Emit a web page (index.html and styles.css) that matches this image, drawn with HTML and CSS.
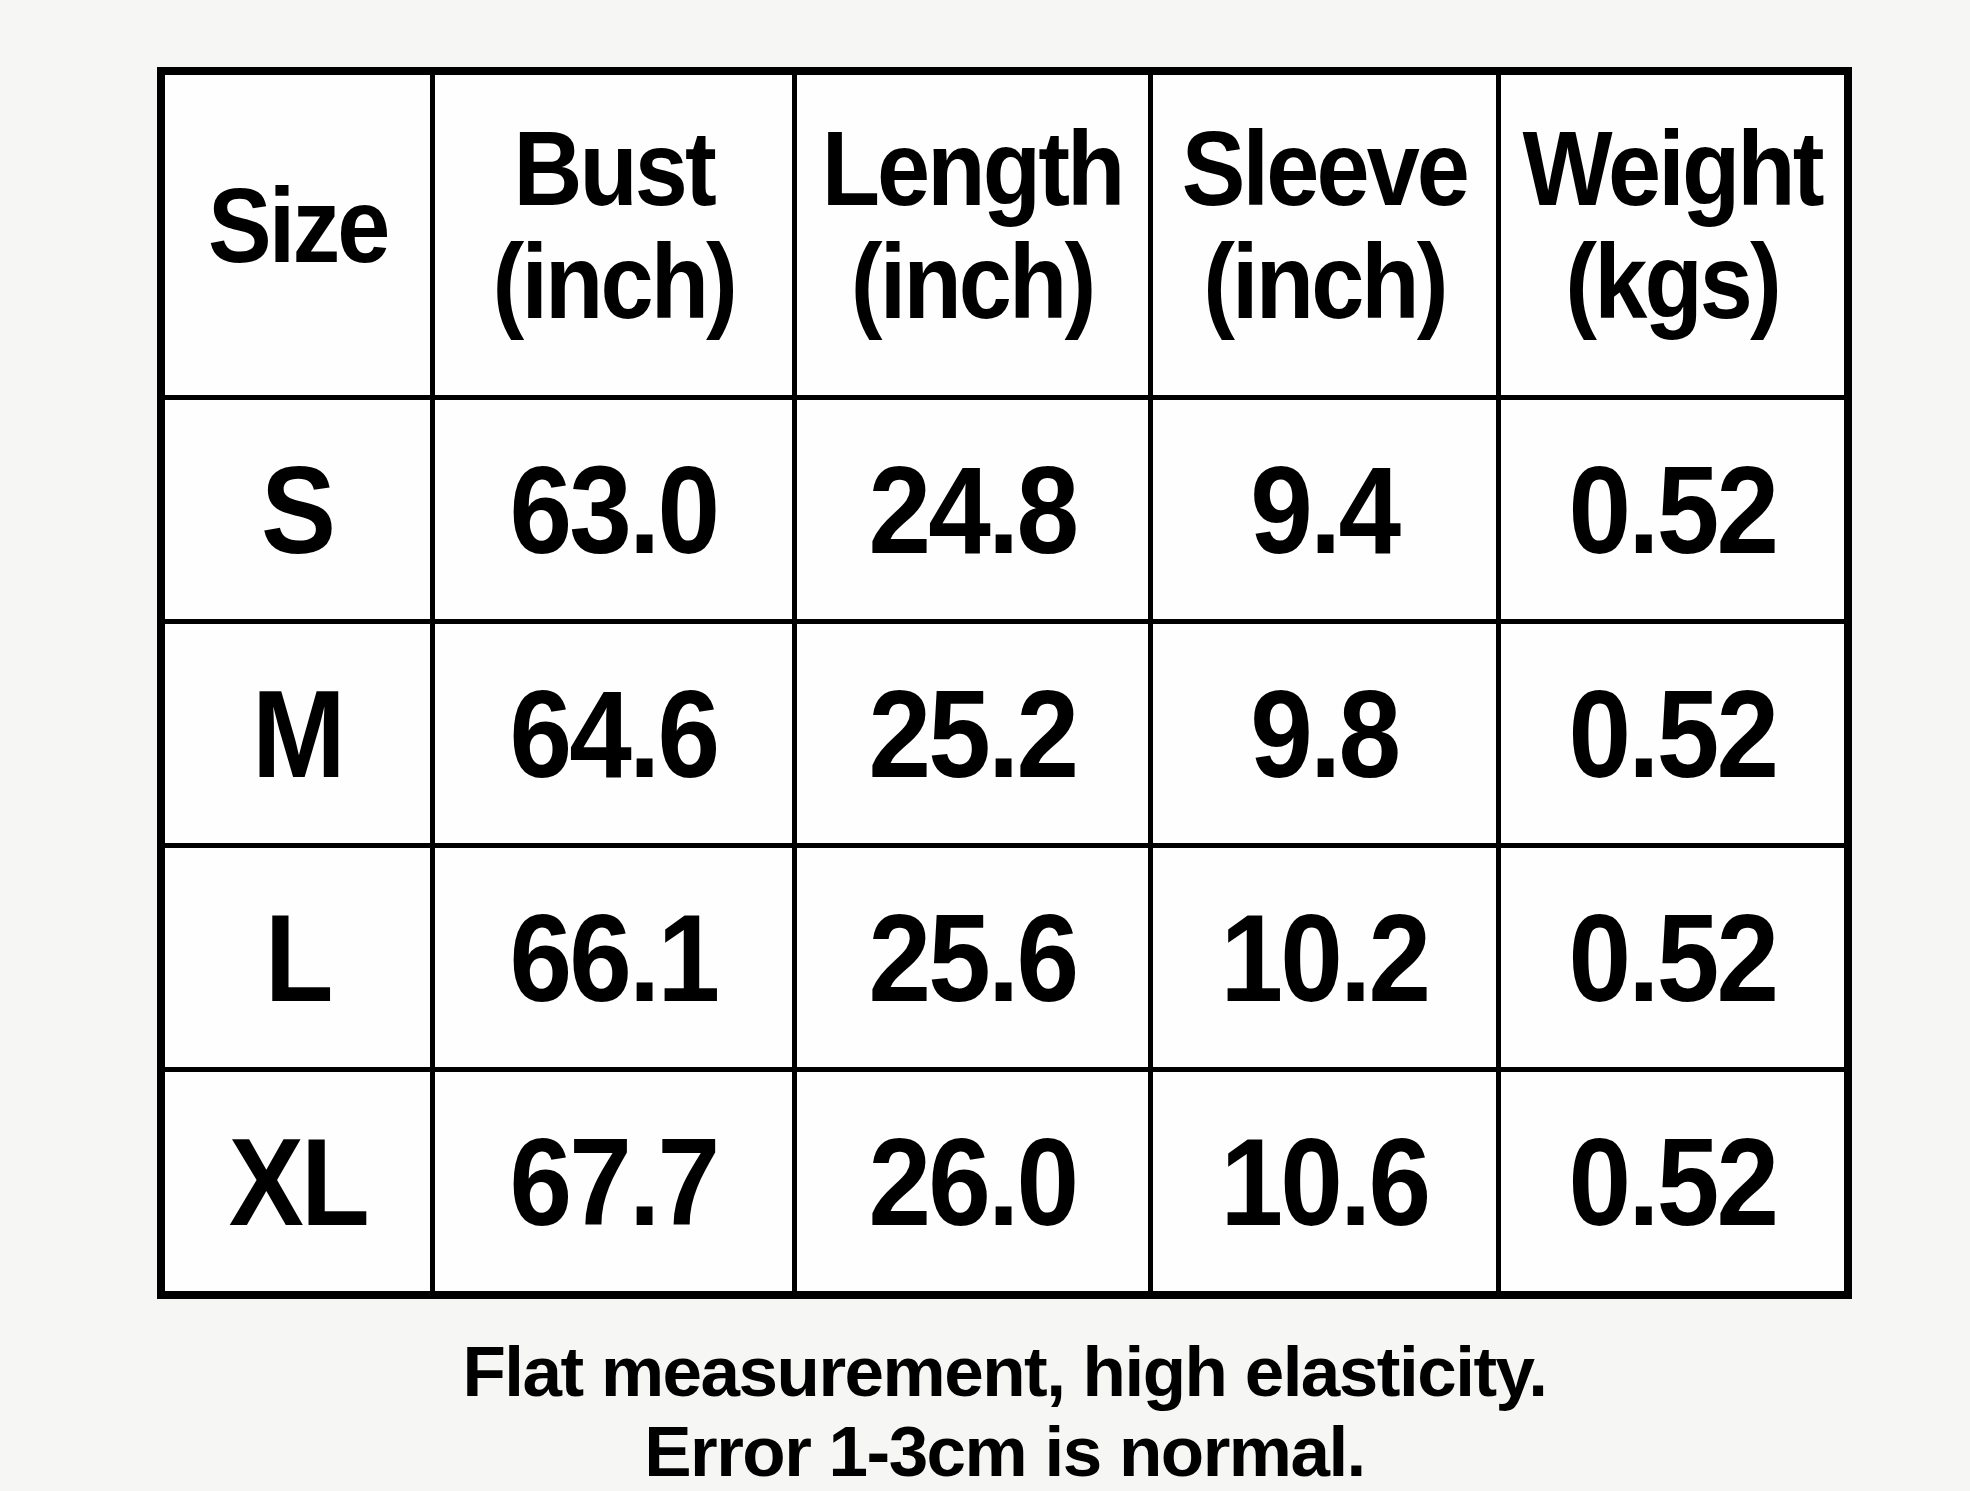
FILE: index.html
```html
<!DOCTYPE html>
<html lang="en">
<head>
<meta charset="UTF-8">
<meta name="viewport" content="width=device-width, initial-scale=1.0">
<title>Size Chart</title>
<link rel="stylesheet" href="styles.css">
</head>
<body>
<div class="main">
    <table class="size_table">
        <colgroup>
            <col class="col_size">
            <col class="col_bust">
            <col class="col_length">
            <col class="col_sleeve">
            <col class="col_weight">
        </colgroup>
        <thead>
            <tr class="head_row">
                <td><span>Size</span></td>
                <td><span>Bust<br>(inch)</span></td>
                <td><span>Length<br>(inch)</span></td>
                <td><span>Sleeve<br>(inch)</span></td>
                <td><span>Weight<br>(kgs)</span></td>
            </tr>
        </thead>
        <tbody>
            <tr>
                <td><span>S</span></td>
                <td><span>63.0</span></td>
                <td><span>24.8</span></td>
                <td><span>9.4</span></td>
                <td><span>0.52</span></td>
            </tr>
            <tr>
                <td><span>M</span></td>
                <td><span>64.6</span></td>
                <td><span>25.2</span></td>
                <td><span>9.8</span></td>
                <td><span>0.52</span></td>
            </tr>
            <tr>
                <td><span>L</span></td>
                <td><span>66.1</span></td>
                <td><span>25.6</span></td>
                <td><span>10.2</span></td>
                <td><span>0.52</span></td>
            </tr>
            <tr>
                <td><span>XL</span></td>
                <td><span>67.7</span></td>
                <td><span>26.0</span></td>
                <td><span>10.6</span></td>
                <td><span>0.52</span></td>
            </tr>
        </tbody>
    </table>
    <p class="note">Flat measurement, high elasticity.<br>Error 1-3cm is normal.</p>
</div>
</body>
</html>
```

FILE: styles.css
```css
* {
    margin: 0;
    padding: 0;
    box-sizing: border-box;
    font-family: "Liberation Sans", Arial, sans-serif;
}

body {
    background-color: #f6f6f4;
    color: #000000;
}

.main {
    width: 1695px;
    margin-left: 157px;
    padding-top: 67px;
}

.size_table {
    width: 1695px;
    table-layout: fixed;
    border: 3px solid #000000;
    border-spacing: 5px;
    background: #000000;
}

.col_size { width: 265px; }
.col_bust { width: 357px; }
.col_length { width: 351px; }
.col_sleeve { width: 343px; }
.col_weight { width: 343px; }

.size_table td {
    background: #fefefe;
    text-align: center;
    vertical-align: middle;
    font-weight: 700;
    font-size: 125px;
    line-height: 1;
    height: 219px;
    white-space: nowrap;
}

.size_table td span {
    display: inline-block;
    letter-spacing: -0.025em;
    transform: scaleX(0.9);
}

.head_row td {
    height: 320px;
    padding-bottom: 20px;
    font-size: 106px;
    line-height: 113px;
}

.head_row td span {
    letter-spacing: -0.03em;
    transform: scaleX(0.9);
}

.note {
    margin-top: 33px;
    text-align: center;
    font-weight: 700;
    font-size: 71px;
    line-height: 80px;
    letter-spacing: -1.5px;
}
```
